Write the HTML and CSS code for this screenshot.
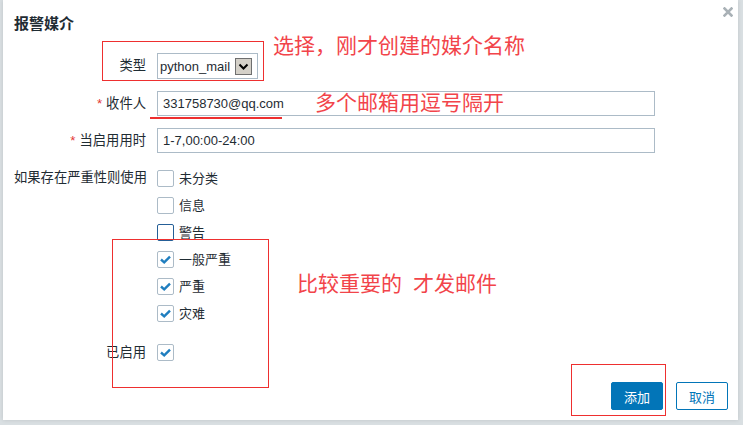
FILE: index.html
```html
<!DOCTYPE html>
<html>
<head>
    <meta charset="utf-8">
    <title>报警媒介</title>
    <link rel="stylesheet" href="styles.css">
</head>
<body>
    <div class="dialog">
        <div class="dialogHead">
            <h4>报警媒介</h4>
            <span class="close">
                <svg width="10" height="10" viewBox="0 0 10 10"><path d="M1.5 1.5 L8.5 8.5 M8.5 1.5 L1.5 8.5" stroke="#a9b1b6" stroke-width="2.6" stroke-linecap="square"/></svg>
            </span>
        </div>

        <form class="mediaForm">
            <label class="lbl">类型</label>
            <div class="ctl">
                <div class="select">
                    <span>python_mail</span>
                    <span class="arrow">
                        <svg width="15" height="15" viewBox="0 0 15 15"><path d="M3.5 5.5 L7.5 9.5 L11.5 5.5" fill="none" stroke="#000" stroke-width="2"/></svg>
                    </span>
                </div>
            </div>

            <label class="lbl"><span class="star">*</span>收件人</label>
            <div class="ctl"><input class="textBox" type="text" value="331758730@qq.com"></div>

            <label class="lbl"><span class="star">*</span>当启用用时</label>
            <div class="ctl"><input class="textBox" type="text" value="1-7,00:00-24:00"></div>

            <label class="lbl topLbl">如果存在严重性则使用</label>
            <div class="ctl checkList">
                <div class="checkRow"><span class="box"></span>未分类</div>
                <div class="checkRow"><span class="box"></span>信息</div>
                <div class="checkRow"><span class="box focus"></span>警告</div>
                <div class="checkRow"><span class="box"><svg width="15" height="15" viewBox="0 0 15 15"><path d="M3 7.5 L6.2 10.3 L12 4.6" fill="none" stroke="#1f7ebf" stroke-width="2.4"/></svg></span>一般严重</div>
                <div class="checkRow"><span class="box"><svg width="15" height="15" viewBox="0 0 15 15"><path d="M3 7.5 L6.2 10.3 L12 4.6" fill="none" stroke="#1f7ebf" stroke-width="2.4"/></svg></span>严重</div>
                <div class="checkRow"><span class="box"><svg width="15" height="15" viewBox="0 0 15 15"><path d="M3 7.5 L6.2 10.3 L12 4.6" fill="none" stroke="#1f7ebf" stroke-width="2.4"/></svg></span>灾难</div>
            </div>

            <label class="lbl enabledLbl">已启用</label>
            <div class="ctl enabledCtl">
                <span class="box"><svg width="15" height="15" viewBox="0 0 15 15"><path d="M3 7.5 L6.2 10.3 L12 4.6" fill="none" stroke="#1f7ebf" stroke-width="2.4"/></svg></span>
            </div>
        </form>

        <div class="dialogFoot">
            <button class="btnMain" type="button">添加</button>
            <button class="btnAlt" type="button">取消</button>
        </div>

        <!-- red notes drawn over the screenshot -->
        <div class="note noteBox1"></div>
        <div class="note noteLine"></div>
        <div class="note noteBox2"></div>
        <div class="note noteBox3"></div>
        <div class="noteText noteText1">选择，刚才创建的媒介名称</div>
        <div class="noteText noteText2">多个邮箱用逗号隔开</div>
        <div class="noteText noteText3">比较重要的<span class="gap"></span>才发邮件</div>
    </div>
</body>
</html>
```

FILE: styles.css
```css
body {
    margin: 0;
    width: 743px;
    height: 425px;
    overflow: hidden;
    background-color: #d9dfe2;
    font-family: "Liberation Sans", "Noto Sans CJK SC", sans-serif;
    font-size: 13px;
    color: #1f2c33;
}

.dialog {
    position: relative;
    margin-left: 3px;
    width: 735px;
    height: 420px;
    background-color: #fff;
    box-shadow: 0 0 4px rgba(0, 0, 0, 0.12);
}

.dialogHead {
    display: flex;
    justify-content: space-between;
    align-items: flex-start;
    padding: 14px 5px 0 11px;
    height: 20px;
}

.dialogHead h4 {
    margin: 0;
    font-size: 15px;
    line-height: 20px;
    font-weight: bold;
}

.close {
    margin-top: -7px;
    width: 10px;
    height: 10px;
    display: flex;
}

.mediaForm {
    display: grid;
    grid-template-columns: 132px 498px;
    column-gap: 11px;
    row-gap: 12px;
    align-items: center;
    margin: 19px 0 0 11px;
}

.lbl {
    text-align: right;
    white-space: nowrap;
    line-height: 16px;
    font-size: 13.3px;
}

.star {
    color: #e33734;
    margin-right: 4px;
}

.topLbl {
    align-self: start;
    margin-top: 5px;
}

.ctl {
    display: flex;
}

.select {
    box-sizing: border-box;
    width: 101px;
    height: 26px;
    border: 1px solid #acbbc7;
    display: flex;
    align-items: center;
    justify-content: space-between;
    padding: 0 5px 0 2px;
    font-size: 13px;
}

.arrow {
    box-sizing: border-box;
    width: 17px;
    height: 17px;
    background-color: #d4d0c8;
    border: 1px solid #6f6f6f;
    display: flex;
}

.textBox {
    box-sizing: border-box;
    width: 498px;
    height: 25px;
    border: 1px solid #acbbc7;
    padding: 0 5px;
    font-family: "Liberation Sans", sans-serif;
    font-size: 13px;
    color: #1f2c33;
    outline: none;
}

.checkList {
    flex-direction: column;
    gap: 10px;
    margin-top: 5px;
}

.checkRow {
    display: flex;
    align-items: center;
    height: 17px;
    gap: 5px;
    line-height: 17px;
}

.box {
    box-sizing: border-box;
    width: 17px;
    height: 17px;
    border: 1px solid #acbbc7;
    border-radius: 2px;
    display: flex;
    flex-shrink: 0;
    background-color: #fff;
}

.box.focus {
    border-color: #255f97;
}

.enabledLbl,
.enabledCtl {
    margin-top: 10px;
}

.dialogFoot {
    display: flex;
    justify-content: flex-end;
    gap: 13px;
    margin-top: 21px;
    padding-right: 10px;
}

.btnMain,
.btnAlt {
    box-sizing: border-box;
    width: 52px;
    height: 28px;
    border-radius: 2px;
    font-family: "Noto Sans CJK SC", sans-serif;
    font-size: 13px;
    padding: 0;
}

.btnMain {
    background-color: #0275b8;
    border: 1px solid #0275b8;
    color: #fff;
}

.btnAlt {
    background-color: #fff;
    border: 1px solid #0275b8;
    color: #0275b8;
}

.note {
    position: absolute;
    box-sizing: border-box;
    border: 1px solid #ee2f2f;
}

.noteBox1 {
    left: 99px;
    top: 41px;
    width: 162px;
    height: 40px;
}

.noteLine {
    left: 147px;
    top: 117px;
    width: 132px;
    height: 2px;
    border: none;
    background-color: #ee2f2f;
}

.noteBox2 {
    left: 109px;
    top: 239px;
    width: 157px;
    height: 149px;
}

.noteBox3 {
    left: 568px;
    top: 364px;
    width: 95px;
    height: 52px;
}

.noteText {
    position: absolute;
    font-family: "Noto Sans CJK SC", sans-serif;
    font-size: 21px;
    line-height: 24px;
    color: #f2444a;
    white-space: nowrap;
}

.noteText1 {
    left: 270px;
    top: 32px;
}

.noteText2 {
    left: 312px;
    top: 89px;
}

.noteText3 {
    left: 294px;
    top: 270px;
}

.noteText3 .gap {
    display: inline-block;
    width: 11px;
}
```
